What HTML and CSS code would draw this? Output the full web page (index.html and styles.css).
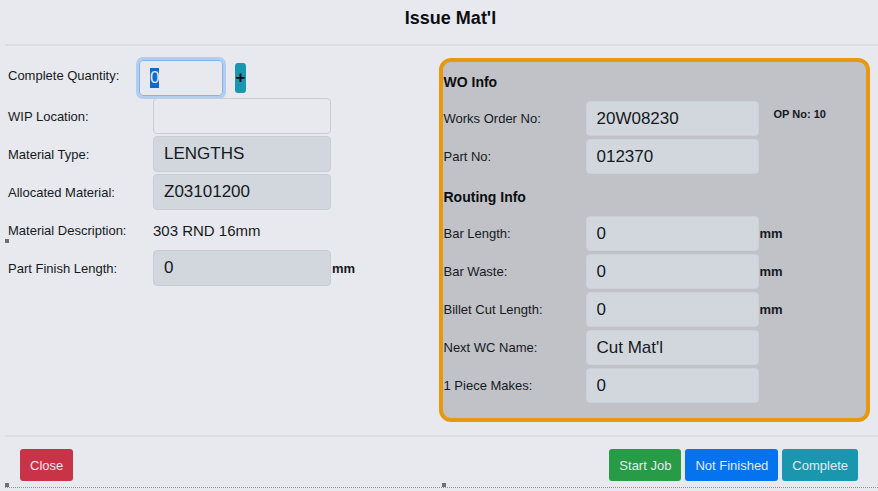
FILE: index.html
```
<!DOCTYPE html>
<html lang="en">
<head>
  <meta charset="UTF-8" />
  <meta name="viewport" content="width=device-width, initial-scale=1.0"/>
  <title>Issue Mat'l</title>
  <link rel="stylesheet" href="styles.css">
</head>
<body>

  <form class="issue-form">
    <header class="form-header">
      <h1>Issue Mat'l</h1>
    </header>

    <div class="form-body">
      <!-- Material -->
      <section class="material">
        <div class="row qty-row">
          <label for="qty">Complete Quantity:</label>
          <input type="text" id="qty" class="field" value="0" autocomplete="off" />
          <button type="button" class="btn-plus" id="plusBtn" aria-label="Add quantity">+</button>
        </div>
        <div class="row">
          <label for="wip">WIP Location:</label>
          <input type="text" id="wip" class="field" />
        </div>
        <div class="row">
          <label for="matType">Material Type:</label>
          <input type="text" id="matType" class="field" value="LENGTHS" readonly />
        </div>
        <div class="row">
          <label for="allocated">Allocated Material:</label>
          <input type="text" id="allocated" class="field" value="Z03101200" readonly />
        </div>
        <div class="row">
          <label for="matDesc">Material Description:</label>
          <output id="matDesc" class="description">303 RND 16mm</output>
        </div>
        <div class="row">
          <label for="finishLength">Part Finish Length:</label>
          <input type="text" id="finishLength" class="field" value="0" readonly />
          <span class="unit">mm</span>
        </div>
      </section>

      <!-- Works order and routing -->
      <section class="info-panel">
        <h2>WO Info</h2>
        <div class="row">
          <label for="woNo">Works Order No:</label>
          <input type="text" id="woNo" class="field" value="20W08230" readonly />
          <span class="op-no">OP No: 10</span>
        </div>
        <div class="row">
          <label for="partNo">Part No:</label>
          <input type="text" id="partNo" class="field" value="012370" readonly />
        </div>

        <h2>Routing Info</h2>
        <div class="row">
          <label for="barLength">Bar Length:</label>
          <input type="text" id="barLength" class="field" value="0" readonly />
          <span class="unit">mm</span>
        </div>
        <div class="row">
          <label for="barWaste">Bar Waste:</label>
          <input type="text" id="barWaste" class="field" value="0" readonly />
          <span class="unit">mm</span>
        </div>
        <div class="row">
          <label for="billet">Billet Cut Length:</label>
          <input type="text" id="billet" class="field" value="0" readonly />
          <span class="unit">mm</span>
        </div>
        <div class="row">
          <label for="nextWc">Next WC Name:</label>
          <input type="text" id="nextWc" class="field" value="Cut Mat'l" readonly />
        </div>
        <div class="row">
          <label for="pieceMakes">1 Piece Makes:</label>
          <input type="text" id="pieceMakes" class="field" value="0" readonly />
        </div>
      </section>
    </div>

    <footer class="form-footer">
      <button type="button" class="btn btn-danger">Close</button>
      <div class="actions">
        <button type="button" class="btn btn-success">Start Job</button>
        <button type="button" class="btn btn-primary">Not Finished</button>
        <button type="button" class="btn btn-info">Complete</button>
      </div>
    </footer>

    <!-- Selection handles -->
    <span class="handle handle-left"></span>
    <span class="handle handle-corner"></span>
    <span class="handle handle-bottom"></span>
  </form>

  <script>
    const qty = document.getElementById('qty');

    document.getElementById('plusBtn').addEventListener('click', () => {
      qty.value = (parseInt(qty.value, 10) || 0) + 1;
    });

    qty.focus();
    qty.select();
  </script>
</body>
</html>
```

FILE: styles.css
```
* {
  box-sizing: border-box;
  margin: 0;
  padding: 0;
}

body {
  font-family: "Liberation Sans", Arial, sans-serif;
  font-size: 13px;
  color: #16191d;
  background: #e7e9ee;
}

.issue-form {
  position: relative;
  margin-left: 5px;
  border-bottom: 1px dotted #8d9096;
}

.form-header {
  padding: 8px 0 16px 18px;
  border-bottom: 2px solid #dbdde2;
  text-align: center;
}

h1 {
  font-size: 18px;
  line-height: 20px;
  color: #0b0d10;
}

.form-body {
  display: grid;
  grid-template-columns: 1fr 1fr;
  align-items: start;
  padding: 12px 8px 13px 2px;
}

.row {
  display: flex;
  align-items: center;
}

.row label {
  flex: none;
}

.field {
  flex: 0 1 auto;
  min-width: 0;
  height: 36px;
  padding: 0 10px;
  border: 1px solid #c9ced6;
  border-radius: 4px;
  background: transparent;
  color: #16191d;
  font-family: inherit;
  font-size: 17px;
}

.field:read-only {
  background: #d2d7de;
}

.field:focus {
  outline: none;
  border-color: #80b4f0;
  box-shadow: 0 0 0 3px #b3cdee;
}

.field::selection {
  background: #0a6cce;
  color: #e7e9ee;
}

/* Material */
.material {
  display: grid;
  gap: 2px;
  grid-auto-rows: 36px;
  padding: 2px 0 0 1px;
}

.material label {
  width: 145px;
}

.material .field {
  width: 178px;
}

.material .qty-row label {
  width: 131px;
  padding-bottom: 5px;
}

.material .qty-row .field {
  width: 84px;
}

.btn-plus {
  width: 11px;
  height: 30px;
  margin-left: 12px;
  border: none;
  border-radius: 3px;
  background: #1a97ae;
  color: #0b0d10;
  font-family: inherit;
  font-size: 17px;
  font-weight: bold;
  cursor: pointer;
}

.description {
  font-size: 15px;
}

.unit {
  margin-left: 1px;
  font-weight: bold;
}

/* Works order and routing */
.info-panel {
  display: grid;
  gap: 3px;
  padding: 0 0 15px 1px;
  border: 4px solid #e6990f;
  border-radius: 12px;
  background: #c0c2c7;
}

.info-panel h2 {
  padding-top: 4px;
  font-size: 14px;
  line-height: 32px;
  color: #0b0d10;
}

.info-panel label {
  width: 142px;
}

.info-panel .field {
  width: 173px;
  height: 35px;
  border-color: #cbd1d9;
}

.op-no {
  margin-left: 15px;
  padding-bottom: 10px;
  font-size: 11px;
  font-weight: bold;
}

/* Footer */
.form-footer {
  display: flex;
  justify-content: space-between;
  padding: 12px 20px 6px 15px;
  border-top: 2px solid #dbdde2;
}

.actions {
  display: flex;
  gap: 4px;
}

.btn {
  height: 32px;
  padding: 0 10px;
  border: none;
  border-radius: 3px;
  color: #e7e9ee;
  font-family: inherit;
  font-size: 13px;
  cursor: pointer;
}

.btn-danger {
  background: #c93347;
}

.btn-success {
  background: #279b46;
}

.btn-primary {
  background: #0573ee;
}

.btn-info {
  background: #1a97ae;
}

/* Selection handles sit over the edges of the form */
.handle {
  position: absolute;
  width: 4px;
  height: 4px;
  background: #6d6f74;
}

.handle-left {
  left: 0;
  top: 49%;
}

.handle-corner {
  left: 0;
  bottom: 0;
}

.handle-bottom {
  left: 50%;
  bottom: 0;
}
```
